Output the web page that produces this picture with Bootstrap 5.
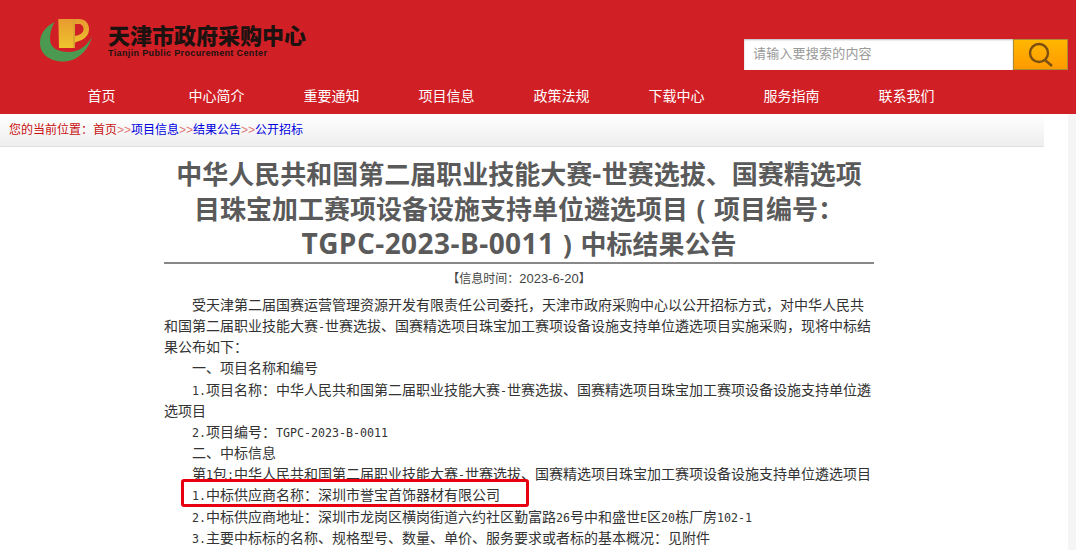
<!DOCTYPE html>
<html lang="zh"><head><meta charset="utf-8">
<link href="https://cdn.jsdelivr.net/npm/bootstrap@5.3.0/dist/css/bootstrap.min.css" rel="stylesheet">
<style>
html,body{height:550px;overflow:hidden;background:#fff}
body{font-family:"Liberation Sans","Noto Sans CJK SC",sans-serif;font-size:14px;color:#333}
.site-top{background:#d11f26;height:114px}
.brand-row{height:82px;padding-left:38px;padding-right:8px}
.logo-mark{margin-right:14px}
.brand-cn{font-size:22px;font-weight:900;color:#1c1210;line-height:24px;margin-top:0}
.brand-en{font-size:9px;font-weight:700;color:#1c1210;line-height:10px;letter-spacing:.36px;margin-top:-1px}
.search-box{margin-left:auto;margin-top:39px;height:31px}
.search-input{width:269px;height:31px;background:#fff;color:#999;font-size:13px;padding:0 9px;line-height:30px;letter-spacing:.2px;box-shadow:inset 0 1px 2px #bbb}
.search-btn{width:55px;height:31px;background:linear-gradient(#ffb700,#ff9a00);border:1px solid #b08a30}
.menu-row{height:32px;padding-left:44px}
.menu-cell{width:115px;text-align:center;color:#fff;font-size:14px;line-height:28px}
.page-rest{height:436px;background:linear-gradient(90deg,#fff 1068px,#f5f5f5 1068px)}
.crumb-row{width:1044px;height:33px;background:linear-gradient(#fff,#eee);border-bottom:1px solid #e0e0e0;padding-left:9px;font-size:12px;line-height:32px;color:#c81010}
.crumb-row a{color:#00d;text-decoration:none}
.crumb-row a.crumb-home{color:#c81010}
.crumb-sep{color:#e07878}
.article{width:710px;margin-left:164px}
.article-title{font-family:"Open Sans","Noto Sans CJK SC",sans-serif;font-size:26px;font-weight:700;color:#5a5a5a;line-height:35px;text-align:center;margin:10px 0 0;padding-bottom:0;border-bottom:2px solid #888}
.title-lat{font-size:28px;letter-spacing:.45px;line-height:1}
.title-par{display:inline-block;width:26px;text-align:center;font-weight:700;line-height:1}
.article-time{font-size:12px;text-align:center;line-height:20px;margin-top:5px;color:#444}
.time-num{font-size:13px;line-height:1}
.article-body{margin-top:6px;font-size:14px;line-height:21.15px;color:#333;position:relative}
.article-body p{margin:0}
.lat{font-family:"DejaVu Sans Mono",monospace;font-size:11.63px;line-height:1}
.ind{text-indent:28px}
.hl{position:absolute;left:17px;top:184px;width:348px;height:28px;border:3px solid #e60012;border-radius:3px}
</style></head><body>
<div class="site-top">
 <div class="brand-row d-flex align-items-center">
  <svg width="56" height="48" viewBox="0 0 56 48" class="logo-mark flex-shrink-0"><defs><linearGradient id="py" x1="0" y1="0" x2="0" y2="1"><stop offset="0" stop-color="#e89a30"/><stop offset="1" stop-color="#eec52c"/></linearGradient></defs><path d="M17 5C6 10 2 18 2 26c0 12 11 18.500 23 18.500 14 0 25-10.500 29-24.500-6 10-14 15-23 15-11 0-19-4-19-13 0-7 2-13 5-17z" fill="#4c9a52"/><path d="M20.300 2H41c6 0 10 4 10 10 0 6-4 10-10 12l-5 2v5H21z" fill="url(#py)"/><path d="M37 7h3.500c3 0 5 2 5 5 0 3.500-3 6-8.500 7z" fill="#d11f26"/><path d="M35.300 2h1.700v29h-1.700z" fill="#d8a030"/></svg>
  <div><div class="brand-cn">天津市政府采购中心</div><div class="brand-en">Tianjin Public Procurement Center</div></div>
  <div class="search-box d-flex align-self-start"><div class="search-input">请输入要搜索的内容</div><div class="search-btn d-flex align-items-center justify-content-center"><svg width="30" height="26" viewBox="0 0 30 26"><circle cx="13" cy="11" r="9" fill="none" stroke="#7a4f10" stroke-width="2.400"/><path d="M19 18l7 6" stroke="#7a4f10" stroke-width="2.400"/></svg></div></div>
 </div>
 <div class="menu-row d-flex">
  <div class="menu-cell">首页</div><div class="menu-cell">中心简介</div><div class="menu-cell">重要通知</div><div class="menu-cell">项目信息</div><div class="menu-cell">政策法规</div><div class="menu-cell">下载中心</div><div class="menu-cell">服务指南</div><div class="menu-cell">联系我们</div>
 </div>
</div>
<div class="page-rest">
<div class="crumb-row">您的当前位置：<a class="crumb-home" href="#">首页</a><span class="crumb-sep">&gt;&gt;</span><a href="#">项目信息</a><span class="crumb-sep">&gt;&gt;</span><a href="#">结果公告</a><span class="crumb-sep">&gt;&gt;</span><a href="#">公开招标</a></div>
<div class="article">
 <h1 class="article-title">中华人民共和国第二届职业技能大赛<span class="title-lat">-</span>世赛选拔、国赛精选项目珠宝加工赛项设备设施支持单位遴选项目<span class="title-par">(</span>项目编号：<span class="title-lat">TGPC-2023-B-0011</span><span class="title-par">)</span>中标结果公告</h1>
 <div class="article-time">【信息时间：<span class="time-num">2023-6-20</span>】</div>
 <div class="article-body">
  <p class="ind">受天津第二届国赛运营管理资源开发有限责任公司委托，天津市政府采购中心以公开招标方式，对中华人民共和国第二届职业技能大赛<span class="lat">-</span>世赛选拔、国赛精选项目珠宝加工赛项设备设施支持单位遴选项目实施采购，现将中标结果公布如下：</p>
  <p class="ind">一、项目名称和编号</p>
  <p class="ind"><span class="lat">1.</span>项目名称：中华人民共和国第二届职业技能大赛<span class="lat">-</span>世赛选拔、国赛精选项目珠宝加工赛项设备设施支持单位遴选项目</p>
  <p class="ind"><span class="lat">2.</span>项目编号：<span class="lat">TGPC-2023-B-0011</span></p>
  <p class="ind">二、中标信息</p>
  <p class="ind">第<span class="lat">1</span>包<span class="lat">:</span>中华人民共和国第二届职业技能大赛<span class="lat">-</span>世赛选拔、国赛精选项目珠宝加工赛项设备设施支持单位遴选项目</p>
  <p class="ind"><span class="lat">1.</span>中标供应商名称：深圳市誉宝首饰器材有限公司</p>
  <p class="ind"><span class="lat">2.</span>中标供应商地址：深圳市龙岗区横岗街道六约社区勤富路<span class="lat">26</span>号中和盛世<span class="lat">E</span>区<span class="lat">20</span>栋厂房<span class="lat">102-1</span></p>
  <p class="ind"><span class="lat">3.</span>主要中标标的名称、规格型号、数量、单价、服务要求或者标的基本概况：见附件</p>
  <div class="hl"></div>
 </div>
</div>
</div>
<script src="https://cdn.jsdelivr.net/npm/bootstrap@5.3.0/dist/js/bootstrap.bundle.min.js"></script>
</body></html>
